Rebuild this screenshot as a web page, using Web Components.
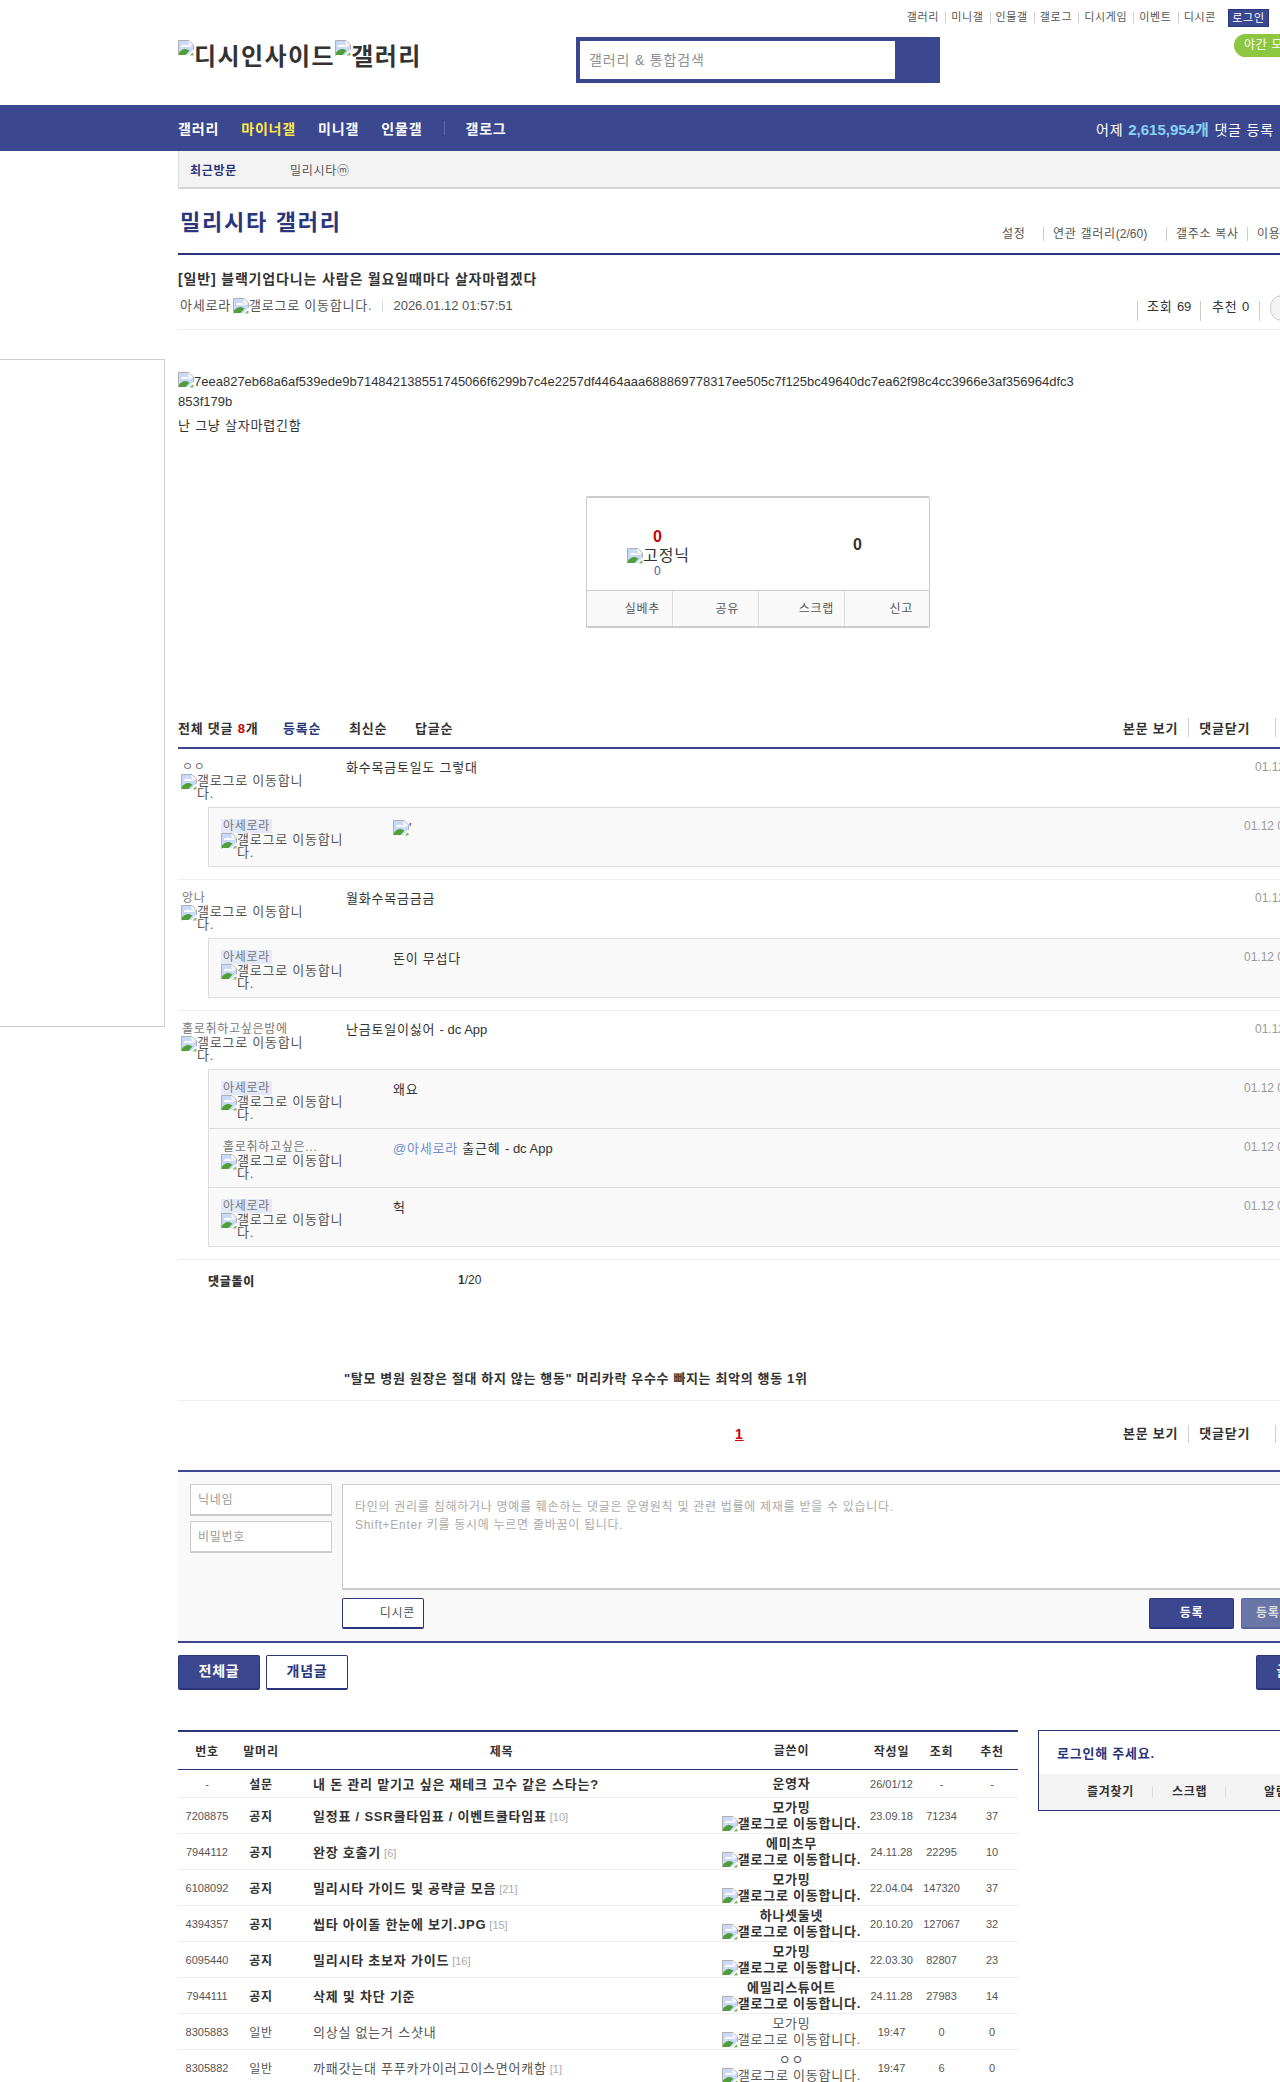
<!DOCTYPE html>
<html lang="ko">
<head>
<meta charset="utf-8">
<title>밀리시타 갤러리</title>
<style>
  html, body { margin: 0; padding: 0; background: #fff; overflow: hidden; }
  body { width: 1280px; height: 2082px; position: relative; font-family: "Liberation Sans", "Noto Sans CJK KR", sans-serif; font-size: 12px; color: #333; }
  * { letter-spacing: .06em; }
  dc-page { display: block; width: 1160px; margin-left: 178px; }
</style>
</head>
<body>
<dc-header></dc-header>
<dc-nav></dc-nav>
<side-banner></side-banner>
<dc-page>
  <sub-bar></sub-bar>
  <gallery-head></gallery-head>
  <post-head></post-head>
  <post-body>
    <vote-box></vote-box>
  </post-body>
  <comment-bar></comment-bar>
  <comment-item nick="ㅇㅇ" date="01.12 02:03:11" text="화수목금토일도 그렇대">
    <reply-item nick="아세로라" mine date="01.12 02:10:31"><broken-img></broken-img>'</reply-item>
  </comment-item>
  <comment-item nick="앙나" date="01.12 02:05:47" text="월화수목금금금">
    <reply-item nick="아세로라" mine date="01.12 02:11:02">돈이 무섭다</reply-item>
  </comment-item>
  <comment-item nick="홀로취하고싶은밤에" date="01.12 02:07:20" text="난금토일이싫어 <span class='lat'>- dc App</span>">
    <reply-item nick="아세로라" mine date="01.12 02:12:18">왜요</reply-item>
    <reply-item nick="홀로취하고싶은..." date="01.12 02:13:40"><span style="color:#6f8fd0">@아세로라</span> 출근혜 <span style="letter-spacing:0">- dc App</span></reply-item>
    <reply-item nick="아세로라" mine date="01.12 02:14:05">헉</reply-item>
  </comment-item>
  <comment-foot></comment-foot>
  <write-form></write-form>
  <list-tabs></list-tabs>
  <board-wrap>
    <board-table>
      <board-row kind="head" num="번호" tag="말머리" title="제목" nick="글쓴이" day="작성일" hit="조회" up="추천"></board-row>
      <board-row kind="poll" num="-" tag="설문" title="내 돈 관리 맡기고 싶은 재테크 고수 같은 스타는?" nick="운영자" day="26/01/12" hit="-" up="-"></board-row>
      <board-row kind="notice" num="7208875" tag="공지" title="일정표 / SSR쿨타임표 / 이벤트쿨타임표" cnt="[10]" nick="모가밍" day="23.09.18" hit="71234" up="37"></board-row>
      <board-row kind="notice" num="7944112" tag="공지" title="완장 호출기" cnt="[6]" nick="에미츠무" day="24.11.28" hit="22295" up="10"></board-row>
      <board-row kind="notice" num="6108092" tag="공지" title="밀리시타 가이드 및 공략글 모음" cnt="[21]" nick="모가밍" day="22.04.04" hit="147320" up="37"></board-row>
      <board-row kind="notice" num="4394357" tag="공지" title="씹타 아이돌 한눈에 보기.JPG" cnt="[15]" nick="하나셋둘넷" day="20.10.20" hit="127067" up="32"></board-row>
      <board-row kind="notice" num="6095440" tag="공지" title="밀리시타 초보자 가이드" cnt="[16]" nick="모가밍" day="22.03.30" hit="82807" up="23"></board-row>
      <board-row kind="notice" num="7944111" tag="공지" title="삭제 및 차단 기준" nick="에밀리스튜어트" day="24.11.28" hit="27983" up="14"></board-row>
      <board-row num="8305883" tag="일반" title="의상실 없는거 스샷내" nick="모가밍" day="19:47" hit="0" up="0"></board-row>
      <board-row num="8305882" tag="일반" title="까패갓는대 푸푸카가이러고이스면어캐함" cnt="[1]" nick="ㅇㅇ" day="19:47" hit="6" up="0"></board-row>
    </board-table>
    <login-box></login-box>
  </board-wrap>
</dc-page>

<script>
const BLUE = '#3b4890';
const NAVY = '#29367c';

/** Base class: puts the html from render() into an open shadow root. */
class DcElement extends HTMLElement {
  constructor () {
    super();
    this.attachShadow({ mode: 'open' });
  }

  connectedCallback () {
    // the Korean face runs narrower than the reference, so it gets a little tracking
    this.shadowRoot.innerHTML = `<style>* { letter-spacing: .06em; } .lat { letter-spacing: 0; }</style>${this.render()}`;
  }
}

class BrokenImg extends DcElement {
  render () {
    const alt = this.getAttribute('alt');
    return `
      <style>
        :host { display: inline-flex; align-items: flex-start; vertical-align: top; text-align: left; }
        svg { flex: none; display: block; width: 16px; height: 16px; }
        span { display: block; }
      </style>
      <svg viewBox="0 0 16 16" aria-hidden="true">
        <path d="M.5 15.500V.5H11L15.500 5v5" fill="#fff" stroke="#b0b0b0"/>
        <path d="M1 1h9.500v4.500H15v5L11 15H1z" fill="#c9d9fa"/>
        <path d="M3 7c-.5-1.800 2-3 3.500-2 1.500-.5 3 .6 4 1 1.500 0 3 .3 3.500 1z" fill="#fff"/>
        <path d="M1 15v-2.500C3 10.500 5 9 7 9c1.500 0 3 .6 4.500 1.500L7.500 15z" fill="#4f9e36"/>
        <path d="M9.500 15.500l6-6v1.500l-4 4.500z" fill="#fff"/>
        <path d="M11.500 15.500l3-3 1 1v2z" fill="#84bd6c"/>
      </svg>
      ${alt ? `<span>${alt}</span>` : ''}
    `;
  }
}

class DcHeader extends DcElement {
  render () {
    const links = ['갤러리', '미니갤', '인물갤', '갤로그', '디시게임', '이벤트', '디시콘'];
    return `
      <style>
        :host { display: block; height: 105px; box-sizing: border-box; padding: 9px 0 0 178px; width: 1280px; overflow: hidden; }
        .top { display: flex; justify-content: flex-end; align-items: center; width: 1091px; height: 18px; font-size: 11px; color: #555; }
        .top span { line-height: 11px; white-space: nowrap; margin-bottom: 2px; }
        .top span + span { border-left: 1px solid #ccc; margin-left: 6px; padding-left: 5px; }
        .top b { background: ${BLUE}; color: #fff; font-weight: 400; font-size: 11px; width: 41px; height: 18px; line-height: 17px; text-align: center; margin-left: 12px; border: 1px solid ${NAVY}; box-sizing: border-box; flex: none; }
        .row { display: flex; margin-top: 10px; }
        .logo { width: 398px; flex: none; padding-top: 3px; box-sizing: border-box; font-size: 24px; line-height: 34px; color: #333; font-weight: 700; white-space: nowrap; display: flex; }
        .logo broken-img { letter-spacing: .08em; }
        .search { width: 364px; flex: none; height: 46px; box-sizing: border-box; border: 4px solid ${BLUE}; border-right-width: 45px; background: #fff; font-size: 14px; color: #8f8f8f; line-height: 38px; padding-left: 9px; }
        .pill { width: 80px; height: 23px; margin: -3px 0 0 294px; border-radius: 12px 0 0 12px; background: #8dc63f; color: #fff; font-size: 12px; line-height: 23px; padding-left: 10px; box-sizing: border-box; white-space: nowrap; flex: none; }
      </style>
      <div class="top">${links.map(l => `<span>${l}</span>`).join('')}<b>로그인</b></div>
      <div class="row">
        <div class="logo"><broken-img alt="디시인사이드"></broken-img><broken-img alt="갤러리"></broken-img></div>
        <div class="search">갤러리 &amp; 통합검색</div>
        <div class="pill">야간 모드</div>
      </div>
    `;
  }
}

class DcNav extends DcElement {
  render () {
    return `
      <style>
        :host { display: block; height: 46px; background: ${BLUE}; color: #fff; font-weight: 700; font-size: 14px; padding-left: 178px; }
        div { display: flex; align-items: center; height: 46px; width: 1096px; white-space: nowrap; }
        a { margin-right: 22px; }
        .on { color: #ffe949; }
        i { width: 1px; height: 14px; background: #5c68a8; margin: 0 20px 0 0; }
        p { margin: 0 0 0 auto; font-weight: 400; font-size: 14px; }
        p b { color: #8ad3f5; font-size: 15px; }
      </style>
      <div>
        <a>갤러리</a><a class="on">마이너갤</a><a>미니갤</a><a>인물갤</a><i></i><a>갤로그</a>
        <p>어제 <b><span class="lat">2,615,954</span>개</b> 댓글 등록</p>
      </div>
    `;
  }
}

class SideBanner extends DcElement {
  render () {
    return `
      <style>
        :host { position: absolute; left: 0; top: 359px; width: 164px; height: 666px; border: 1px solid #ccc; border-left: 0; background: #fff; }
      </style>
    `;
  }
}

class SubBar extends DcElement {
  render () {
    return `
      <style>
        :host { display: flex; align-items: center; height: 38px; box-sizing: border-box; background: #f3f3f3; border-left: 1px solid #ddd; border-bottom: 2px solid #d5d5d5; font-size: 12px; padding-left: 11px; color: #555; }
        b { color: ${NAVY}; width: 100px; }
      </style>
      <b>최근방문</b><span>밀리시타ⓜ</span>
    `;
  }
}

class GalleryHead extends DcElement {
  render () {
    return `
      <style>
        :host { display: flex; height: 66px; box-sizing: border-box; border-bottom: 2px solid ${NAVY}; position: relative; }
        h2 { margin: 20px 0 0 2px; font-size: 22px; line-height: 28px; color: ${NAVY}; font-weight: 700; letter-spacing: .08em; }
        ul { list-style: none; margin: 38px 0 0; padding: 0; display: flex; font-size: 12px; color: #555; line-height: 14px; position: absolute; left: 824px; white-space: nowrap; }
        li { border-left: 1px solid #ccc; padding-left: 9px; }
        li:first-child { border: 0; padding: 0; width: 41px; }
        li:nth-child(2) { width: 113px; }
        li:nth-child(3) { width: 71px; }
      </style>
      <h2>밀리시타 갤러리</h2>
      <ul><li>설정</li><li>연관 갤러리<span class="lat">(2/60)</span></li><li>갤주소 복사</li><li>이용안내</li></ul>
    `;
  }
}

class PostHead extends DcElement {
  render () {
    return `
      <style>
        :host { display: block; height: 75px; box-sizing: border-box; border-bottom: 1px solid #eee; padding-top: 16px; }
        h3 { margin: 0; font-size: 14px; line-height: 16px; color: #333; font-weight: 700; }
        .meta { display: flex; align-items: flex-start; margin-top: 11px; font-size: 13px; color: #555; height: 18px; white-space: nowrap; padding-left: 2px; line-height: 16px; }
        .meta broken-img { margin-left: 2px; }
        .date { border-left: 1px solid #ddd; margin: 2px 0 0 10px; padding-left: 10px; line-height: 12px; height: 12px; }
        .stat { position: absolute; left: 1137px; top: 301px; display: flex; font-size: 13px; line-height: 12px; }
        .stat span { border-left: 1px solid #ccc; padding-left: 9px; white-space: nowrap; box-sizing: border-box; }
        .stat .v { width: 63px; }
        .stat .g { width: 59px; padding-left: 11px; }
        .stat i { width: 26px; height: 24px; margin: -6px 0 0 0; border: 1px solid #ccc; border-radius: 12px; background: #f3f3f3; display: block; flex: none; }
        .stat u { border-left: 1px solid #ccc; width: 10px; display: block; }
      </style>
      <h3>[일반] 블랙기업다니는 사람은 월요일때마다 살자마렵겠다</h3>
      <div class="meta">아세로라<broken-img alt="갤로그로 이동합니다."></broken-img><span class="date lat">2026.01.12 01:57:51</span></div>
      <div class="stat"><span class="v">조회 <b class="lat" style="font-weight:400">69</b></span><span class="g">추천 <b class="lat" style="font-weight:400">0</b></span><u></u><i></i></div>
    `;
  }
}

class PostBody extends DcElement {
  render () {
    return `
      <style>
        :host { display: block; padding-top: 42px; height: 385px; box-sizing: border-box; font-size: 13px; line-height: 20px; color: #333; }
        .url { width: 900px; word-break: break-all; }
        broken-img { height: 16px; }
        p { margin: 4px 0 0; line-height: 20px; }
        .vote { margin: 60px auto 0; width: 344px; }
      </style>
      <div class="url lat"><broken-img></broken-img>7eea827eb68a6af539ede9b714842138551745066f6299b7c4e2257df4464aaa688869778317ee505c7f125bc49640dc7ea62f98c4cc3966e3af356964dfc3853f179b</div>
      <p>난 그냥 살자마렵긴함</p>
      <div class="vote"><slot></slot></div>
    `;
  }
}

class VoteBox extends DcElement {
  render () {
    return `
      <style>
        :host { display: block; width: 344px; height: 132px; box-sizing: border-box; border: 1px solid #ccc; border-top-width: 2px; border-bottom-width: 2px; border-radius: 2px; }
        .nums { height: 93px; box-sizing: border-box; position: relative; border-bottom: 1px solid #ccc; line-height: 16px; }
        .up { position: absolute; left: 66px; top: 31px; font-size: 16px; font-weight: 700; color: #c00; }
        .fix { position: absolute; left: 40px; top: 50px; font-size: 16px; color: #333; white-space: nowrap; }
        .sub { position: absolute; left: 67px; top: 65px; font-size: 12px; color: #3b5b9b; }
        .down { position: absolute; left: 266px; top: 39px; font-size: 16px; font-weight: 700; color: #333; }
        .btns { display: grid; grid-template-columns: repeat(4, 86px); background: #f9f9f9; height: 35px; font-size: 12px; color: #555; line-height: 37px; text-align: right; overflow: hidden; }
        .btns span { border-right: 1px solid #ddd; box-sizing: border-box; padding-right: 12px; white-space: nowrap; }
        .btns span:nth-child(2) { padding-right: 19px; }
        .btns span:nth-child(3) { padding-right: 10px; }
        .btns span:last-child { border: 0; padding-right: 18px; }
      </style>
      <div class="nums">
        <span class="up">0</span>
        <span class="fix"><broken-img alt="고정닉"></broken-img></span>
        <span class="sub">0</span>
        <span class="down">0</span>
      </div>
      <div class="btns"><span>실베추</span><span>공유</span><span>스크랩</span><span>신고</span></div>
    `;
  }
}

class CommentBar extends DcElement {
  render () {
    return `
      <style>
        :host { display: flex; align-items: center; height: 34px; box-sizing: border-box; border-bottom: 2px solid ${BLUE}; font-size: 13px; font-weight: 700; color: #333; white-space: nowrap; padding-bottom: 7px; }
        em { font-style: normal; color: #c00; }
        .all { width: 105px; }
        .s { width: 66px; }
        .on { color: ${NAVY}; }
        .r { position: absolute; left: 1123px; display: flex; }
        .r span { padding-right: 10px; }
        .r span + span { border-left: 1px solid #ccc; padding-left: 10px; padding-right: 25px; }
        .r i { border-left: 1px solid #ccc; }
      </style>
      <span class="all">전체 댓글 <em>8</em>개</span>
      <span class="s on">등록순</span><span class="s">최신순</span><span class="s">답글순</span>
      <div class="r"><span>본문 보기</span><span>댓글닫기</span><i></i></div>
    `;
  }
}

/** Left column of a comment: nick and the gallog image alt. */
const nickCell = (nick, mine) => `
  <div class="who">
    <span class="nick${mine ? ' mine' : ''}">${nick}</span>
    <broken-img class="gallog" alt="갤로그로 이동합니다."></broken-img>
  </div>`;

const NICK_STYLES = `
  .who { font-size: 13px; line-height: 13px; }
  .nick { display: table; font-size: 12px; line-height: 14px; color: #777; padding: 0 2px; margin-left: 0; white-space: nowrap; }
  .nick.mine { background: #e4e9f9; }
  .gallog { width: 124px; color: #555; }
`;

class CommentItem extends DcElement {
  render () {
    return `
      <style>
        :host { display: block; border-bottom: 1px solid #eee; padding-bottom: 12px; }
        .head { display: flex; height: 58px; box-sizing: border-box; padding: 11px 0 0 3px; }
        ${NICK_STYLES}
        .nick { margin-left: 0; padding: 0 1px; }
        .who { width: 165px; flex: none; }
        .text { flex: 1; font-size: 13px; line-height: 16px; color: #333; }
        .date { width: 83px; font-size: 12px; line-height: 14px; color: #999; white-space: nowrap; }
        .box { display: block; margin: 0 0 0 30px; border: 1px solid #ddd; border-bottom: 0; background: #f9f9f9; }
      </style>
      <div class="head">
        ${nickCell(this.getAttribute('nick'))}
        <div class="text">${this.getAttribute('text')}</div>
        <div class="date lat">${this.getAttribute('date')}</div>
      </div>
      <div class="box"><slot></slot></div>
    `;
  }
}

class ReplyItem extends DcElement {
  render () {
    return `
      <style>
        :host { display: flex; height: 59px; box-sizing: border-box; border-bottom: 1px solid #ddd; padding: 11px 0 0 12px; font-size: 13px; }
        ${NICK_STYLES}
        .who { width: 172px; flex: none; }
        .text { flex: 1; font-size: 13px; line-height: 16px; color: #333; padding-top: 1px; }
        .date { width: 93px; font-size: 12px; line-height: 14px; color: #999; white-space: nowrap; }
      </style>
      ${nickCell(this.getAttribute('nick'), this.hasAttribute('mine'))}
      <div class="text"><slot></slot></div>
      <div class="date lat">${this.getAttribute('date')}</div>
    `;
  }
}

class CommentFoot extends DcElement {
  render () {
    return `
      <style>
        :host { display: block; height: 210px; position: relative; color: #333; }
        .bot { display: flex; padding: 15px 0 0 30px; font-size: 12px; font-weight: 700; line-height: 14px; }
        .bot b { width: 250px; }
        .bot span { font-weight: 400; font-size: 12px; margin-top: -2px; }
        .bot span b { width: auto; }
        .news { margin: 82px 0 0; padding-left: 166px; height: 30px; box-sizing: border-box; font-size: 13px; font-weight: 700; line-height: 16px; border-bottom: 1px solid #eee; letter-spacing: .05em; }
        .pg { display: flex; margin-top: 24px; font-size: 13px; line-height: 18px; font-weight: 700; white-space: nowrap; }
        .pg u { margin-left: 557px; color: #c00; font-size: 14px; width: 388px; }
        .pg span { padding-right: 10px; }
        .pg span + span { border-left: 1px solid #ccc; padding-left: 10px; padding-right: 25px; }
        .pg i { border-left: 1px solid #ccc; }
      </style>
      <div class="bot"><b>댓글돌이</b><span class="lat"><b class="lat">1</b>/20</span></div>
      <div class="news">"탈모 병원 원장은 절대 하지 않는 행동" 머리카락 우수수 빠지는 최악의 행동 1위</div>
      <div class="pg"><u>1</u><span>본문 보기</span><span>댓글닫기</span><i></i></div>
    `;
  }
}

class WriteForm extends DcElement {
  render () {
    return `
      <style>
        :host { display: grid; grid-template-columns: 142px 1fr; column-gap: 10px; height: 173px; box-sizing: border-box; border-top: 2px solid ${BLUE}; border-bottom: 2px solid ${BLUE}; background: #f9f9f9; padding: 12px 0 0 12px; font-size: 12px; color: #999; }
        .in { display: flex; flex-direction: column; gap: 5px; }
        .in div { height: 32px; box-sizing: border-box; background: #fff; border: 1px solid #ccc; border-bottom-width: 2px; padding-left: 7px; line-height: 30px; }
        .area { height: 106px; box-sizing: border-box; background: #fff; border: 1px solid #ccc; border-bottom-width: 2px; padding: 13px 12px; line-height: 18px; color: #aaa; font-size: 12px; }
        .btns { display: flex; margin-top: 8px; font-size: 12px; }
        .btns div { height: 31px; box-sizing: border-box; border: 1px solid ${NAVY}; border-bottom-width: 2px; border-radius: 2px; text-align: center; line-height: 28px; white-space: nowrap; }
        .dccon { width: 82px; background: #fff; color: #555; text-align: right !important; padding-right: 8px; margin-right: 725px; flex: none; }
        .reg { width: 85px; background: ${BLUE}; color: #fff; font-weight: 700; flex: none; margin-right: 7px; }
        .reg2 { width: 85px; background: #6a75a8; color: #ddd; border-color: #5a649c !important; flex: none; font-weight: 700; }
      </style>
      <div class="in"><div>닉네임</div><div>비밀번호</div></div>
      <div>
        <div class="area">타인의 권리를 침해하거나 명예를 훼손하는 댓글은 운영원칙 및 관련 법률에 제재를 받을 수 있습니다.<br>Shift+Enter 키를 동시에 누르면 줄바꿈이 됩니다.</div>
        <div class="btns"><div class="dccon">디시콘</div><div class="reg">등록</div><div class="reg2">등록+추천</div></div>
      </div>
    `;
  }
}

class ListTabs extends DcElement {
  render () {
    return `
      <style>
        :host { display: flex; margin-top: 12px; height: 35px; font-size: 14px; font-weight: 700; }
        div { width: 82px; height: 35px; box-sizing: border-box; border: 1px solid ${NAVY}; border-bottom-width: 2px; border-radius: 2px; text-align: center; line-height: 31px; flex: none; }
        .fill { background: ${BLUE}; color: #fff; margin-right: 6px; }
        .line { background: #fff; color: ${NAVY}; margin-right: 908px; }
      </style>
      <div class="fill">전체글</div><div class="line">개념글</div><div class="fill">글쓰기</div>
    `;
  }
}

class BoardWrap extends DcElement {
  render () {
    return `
      <style>
        :host { display: flex; align-items: flex-start; margin-top: 40px; gap: 20px; }
      </style>
      <slot></slot>
    `;
  }
}

class BoardTable extends DcElement {
  render () {
    return `
      <style>
        :host { display: block; flex: none; width: 840px; border-top: 2px solid ${NAVY}; }
      </style>
      <slot></slot>
    `;
  }
}

class BoardRow extends DcElement {
  render () {
    const get = (name) => this.getAttribute(name) || '';
    const kind = get('kind');
    const cnt = get('cnt') ? `<small class="lat">${get('cnt')}</small>` : '';
    const num = kind === 'head' ? '' : 'lat';
    let writer = get('nick');
    if (kind === 'notice' || kind === '') {
      writer = `<span>${get('nick')}</span><broken-img alt="갤로그로 이동합니다."></broken-img>`;
    }
    return `
      <style>
        :host { display: grid; grid-template-columns: 58px 50px 431px 149px 51px 49px 52px; height: 36px; box-sizing: border-box; border-bottom: 1px solid #eee; align-items: center; text-align: center; font-size: 11px; color: #555; }
        :host([kind="head"]) { height: 38px; border-bottom: 1px solid ${NAVY}; font-size: 12px; font-weight: 700; color: #333; }
        :host([kind="poll"]) { height: 28px; }
        .tag { font-size: 12px; color: #555; }
        .title { text-align: left; padding-left: 27px; font-size: 13px; color: #555; white-space: nowrap; }
        .title small { font-size: 11px; color: #aaa; font-weight: 400; margin-left: 3px; }
        .writer { font-size: 13px; line-height: 16px; color: #555; white-space: nowrap; display: flex; flex-direction: column; align-items: center; }
        :host([kind="notice"]) .tag, :host([kind="notice"]) .title, :host([kind="notice"]) .writer,
        :host([kind="poll"]) .tag, :host([kind="poll"]) .title, :host([kind="poll"]) .writer { font-weight: 700; color: #333; }
        :host([kind="head"]) .tag, :host([kind="head"]) .title, :host([kind="head"]) .writer { font-size: 12px; font-weight: 700; color: #333; text-align: center; padding: 0; }
      </style>
      <div class="${num}">${get('num')}</div>
      <div class="tag">${get('tag')}</div>
      <div class="title">${get('title')}${cnt}</div>
      <div class="writer">${writer}</div>
      <div class="${num}">${get('day')}</div>
      <div class="${num}">${get('hit')}</div>
      <div class="${num}">${get('up')}</div>
    `;
  }
}

class LoginBox extends DcElement {
  render () {
    return `
      <style>
        :host { display: block; flex: none; width: 300px; height: 81px; box-sizing: border-box; border: 1px solid ${NAVY}; }
        h4 { margin: 0; height: 43px; padding: 15px 0 0 18px; box-sizing: border-box; font-size: 13px; line-height: 16px; color: ${NAVY}; }
        div { display: flex; height: 36px; background: #f3f3f3; align-items: center; font-size: 12px; font-weight: 700; color: #333; white-space: nowrap; line-height: 12px; }
        .a { margin-left: 48px; width: 65px; }
        .b { width: 73px; padding-left: 19px; box-sizing: border-box; border-left: 1px solid #ddd; }
        .c { padding-left: 38px; border-left: 1px solid #ddd; }
      </style>
      <h4>로그인해 주세요.</h4>
      <div><span class="a">즐겨찾기</span><span class="b">스크랩</span><span class="c">알림</span></div>
    `;
  }
}

customElements.define('broken-img', BrokenImg);
customElements.define('dc-header', DcHeader);
customElements.define('dc-nav', DcNav);
customElements.define('side-banner', SideBanner);
customElements.define('sub-bar', SubBar);
customElements.define('gallery-head', GalleryHead);
customElements.define('post-head', PostHead);
customElements.define('post-body', PostBody);
customElements.define('vote-box', VoteBox);
customElements.define('comment-bar', CommentBar);
customElements.define('comment-item', CommentItem);
customElements.define('reply-item', ReplyItem);
customElements.define('comment-foot', CommentFoot);
customElements.define('write-form', WriteForm);
customElements.define('list-tabs', ListTabs);
customElements.define('board-wrap', BoardWrap);
customElements.define('board-table', BoardTable);
customElements.define('board-row', BoardRow);
customElements.define('login-box', LoginBox);
</script>
</body>
</html>
